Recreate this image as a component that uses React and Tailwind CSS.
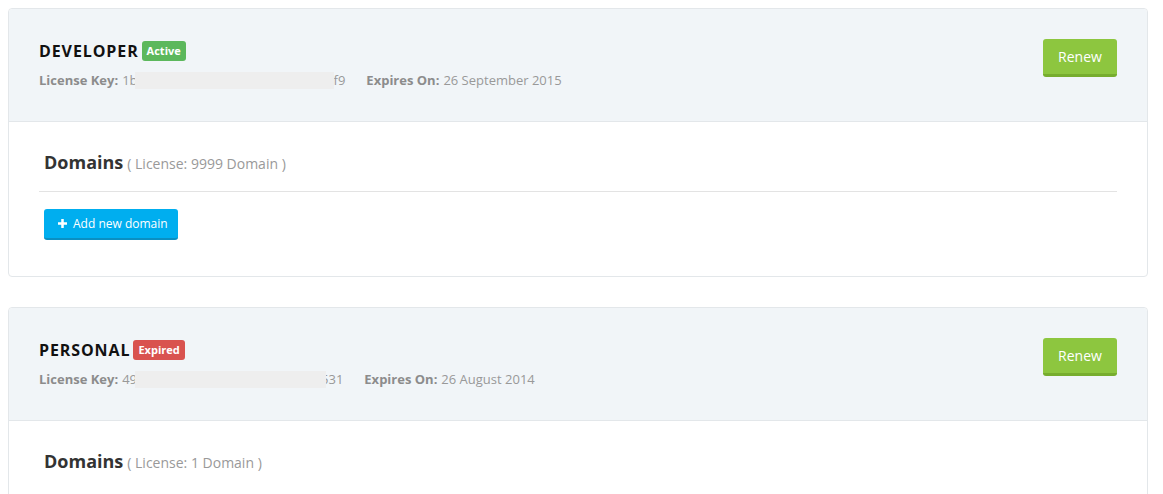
import React from "react";

function Card({ name, badge, badgeClass, keyStart, keyEnd, redactWidth, redactMl, redactMr, expires, domains, showButton }) {
  return (
    <div className="mb-[30px] rounded-[4px] border border-[#e3e7ea] bg-white">
      <div className="flex items-start justify-between rounded-t-[4px] border-b border-[#e3e7ea] bg-[#f1f5f8] px-[30px] pt-[30px] pb-[31px]">
        <div>
          <div className="flex h-[24px] items-center">
            <span className="text-[16px] font-bold leading-none tracking-[0.9px] text-[#111]">{name}</span>
            <span className={"ml-[3px] rounded-[3px] px-[5px] py-[3px] text-[11px] font-bold leading-[14px] text-white " + badgeClass}>{badge}</span>
          </div>
          <div className="mt-[7px] flex h-[20px] items-center text-[13px] leading-[20px] text-[#999]">
            <span className="font-bold text-[#8c8c8c]">License Key:</span>
            <span className="ml-[4px]">{keyStart}</span>
            <span className="relative z-10 h-[17px] bg-[#eeeeee]" style={{ width: redactWidth, marginLeft: redactMl, marginRight: redactMr }}></span>
            <span>{keyEnd}</span>
            <span className="ml-[21px] font-bold text-[#8c8c8c]">Expires On:</span>
            <span className="ml-[4px]">{expires}</span>
          </div>
        </div>
        <button className="h-[38px] w-[74px] rounded-[3px] border-b-[3px] border-[#77ad2e] bg-[#8dc63f] text-[14px] text-white">Renew</button>
      </div>
      <div className="px-[30px] pt-[29px] pb-[36px]">
        <div className={"flex items-baseline pb-[17px] pl-[5px] " + (showButton ? "border-b border-[#e3e3e3]" : "")}>
          <span className="text-[18px] font-bold leading-[22px] text-[#333]">Domains</span>
          <span className="ml-[4px] text-[14px] leading-[20px] text-[#999]">( License: {domains} )</span>
        </div>
        {showButton && (
          <div className="pl-[5px] pt-[17px]">
            <button className="flex h-[31px] items-center gap-[6px] rounded-[3px] border-b-[2px] border-[#0a8fc2] bg-[#00aeef] pl-[14px] pr-[10px] text-[12px] text-white">
              <svg width="9" height="9" viewBox="0 0 10 10"><path d="M3.6 0h2.8v3.6H10v2.8H6.4V10H3.6V6.4H0V3.6h3.6z" fill="white" /></svg>
              Add new domain
            </button>
          </div>
        )}
      </div>
    </div>
  );
}

export default function App() {
  return (
    <div className="min-h-[494px] bg-white p-[8px] pr-[15px]" style={{ fontFamily: '"Open Sans", sans-serif' }}>
      <Card
        name="DEVELOPER"
        badge="Active"
        badgeClass="bg-[#5cb85c]"
        keyStart="1b"
        keyEnd="f9"
        redactWidth={199}
        redactMl={-3}
        redactMr={0}
        expires="26 September 2015"
        domains="9999 Domain"
        showButton
      />
      <Card
        name="PERSONAL"
        badge="Expired"
        badgeClass="bg-[#d9534f]"
        keyStart="49"
        keyEnd="531"
        redactWidth={191}
        redactMl={-2}
        redactMr={-5}
        expires="26 August 2014"
        domains="1 Domain"
      />
    </div>
  );
}
